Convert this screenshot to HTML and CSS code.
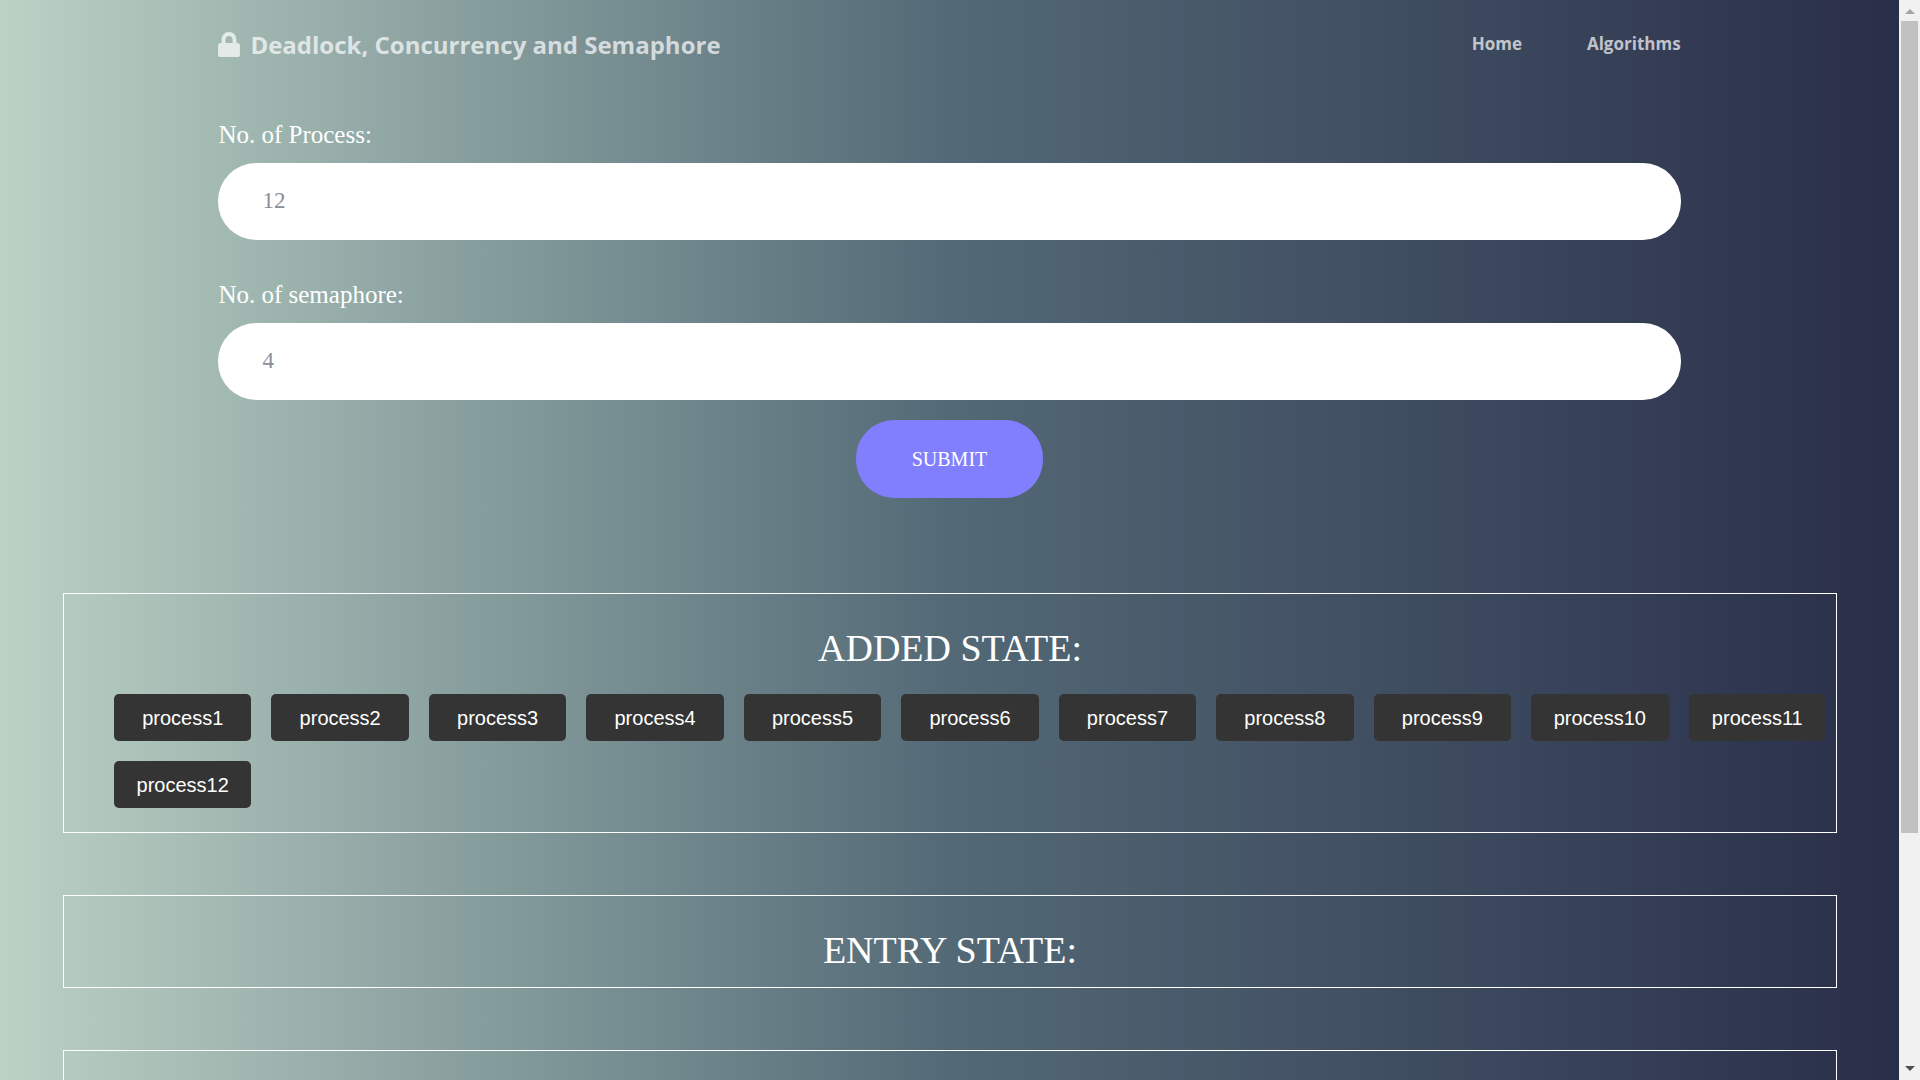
FILE: index.html
```html
<!DOCTYPE html>
<html lang="en">
<head>
  <meta charset="utf-8">
  <meta name="viewport" content="width=device-width, initial-scale=1">
  <title>Deadlock, Concurrency and Semaphore</title>
  <link rel="stylesheet" href="styles.css">
</head>
<body>
  <div class="page">
    <header class="header wrap">
      <a class="brand" href="#">
        <svg class="brand-icon" viewBox="0 0 448 512" aria-hidden="true"><path d="M400 224h-24v-72C376 68.200 307.800 0 224 0S72 68.200 72 152v72H48c-26.500 0-48 21.500-48 48v192c0 26.500 21.500 48 48 48h352c26.500 0 48-21.500 48-48V272c0-26.500-21.500-48-48-48zm-104 0H152v-72c0-39.700 32.300-72 72-72s72 32.300 72 72v72z"/></svg>
        <span>Deadlock, Concurrency and Semaphore</span>
      </a>
      <nav class="nav">
        <a href="#">Home</a>
        <a href="#">Algorithms</a>
      </nav>
    </header>
    <main>
      <form class="form wrap">
        <div class="field">
          <label for="process">No. of Process:</label>
          <input id="process" type="text" value="12">
        </div>
        <div class="field">
          <label for="semaphore">No. of semaphore:</label>
          <input id="semaphore" type="text" value="4">
        </div>
        <button class="submit" type="button">SUBMIT</button>
      </form>
      <div class="states">
        <section class="state">
          <h2>ADDED STATE:</h2>
          <div class="processes">
            <button type="button">process1</button>
            <button type="button">process2</button>
            <button type="button">process3</button>
            <button type="button">process4</button>
            <button type="button">process5</button>
            <button type="button">process6</button>
            <button type="button">process7</button>
            <button type="button">process8</button>
            <button type="button">process9</button>
            <button type="button">process10</button>
            <button type="button">process11</button>
            <button type="button">process12</button>
          </div>
        </section>
        <section class="state">
          <h2>ENTRY STATE:</h2>
        </section>
        <section class="state"></section>
      </div>
    </main>
  </div>
  <div class="scrollbar" aria-hidden="true">
    <svg class="arrow arrow-up" viewBox="0 0 10 5"><path d="M0 5L5 0L10 5z"/></svg>
    <div class="track"><div class="thumb"></div></div>
    <svg class="arrow arrow-down" viewBox="0 0 10 5"><path d="M0 0H10L5 5z"/></svg>
  </div>
</body>
</html>
```

FILE: styles.css
```css
* {
  box-sizing: border-box;
}

body {
  display: flex;
  height: 100vh;
  margin: 0;
  overflow: hidden;
  color: #fff;
  font-family: "Liberation Serif", "Times New Roman", serif;
}

.page {
  flex: 1;
  min-width: 0;
  overflow: hidden;
  background: linear-gradient(to right, #bbd2c5, #536976, #292e49);
}

.wrap {
  width: 77%;
  margin: 0 auto;
}

.header {
  display: flex;
  align-items: center;
  justify-content: space-between;
  height: 88px;
  font-family: "Open Sans", "Segoe UI", sans-serif;
  font-weight: 700;
}

.header a {
  color: rgba(255, 255, 255, 0.7);
  text-decoration: none;
}

.brand {
  display: flex;
  align-items: center;
  gap: 10px;
  font-size: 24px;
}

.brand-icon {
  width: 22px;
  height: 25px;
  fill: currentColor;
}

.nav {
  display: flex;
  gap: 65px;
  padding-bottom: 2px;
  font-size: 17px;
}

.form {
  display: flex;
  flex-direction: column;
  padding-top: 32px;
}

.field {
  display: flex;
  flex-direction: column;
  gap: 13px;
  margin-bottom: 40px;
}

.field label {
  font-size: 25px;
  line-height: 30px;
}

.field input {
  height: 77px;
  padding: 0 44px 2px;
  border: 0;
  border-radius: 38px;
  background: #fff;
  color: #8d8d99;
  font: 23px "Liberation Serif", "Times New Roman", serif;
}

.submit {
  align-self: center;
  width: 187px;
  height: 78px;
  margin-top: -20px;
  border: 0;
  border-radius: 38px;
  background: #827ffe;
  color: #fff;
  font: 20px "Liberation Serif", "Times New Roman", serif;
}

.states {
  display: flex;
  flex-direction: column;
  gap: 62px;
  padding: 95px 62px 62px 63px;
}

.state {
  min-height: 93px;
  border: 1px solid #fff;
}

.state h2 {
  margin: 0;
  padding: 31px 0 14px;
  font-size: 38px;
  font-weight: 400;
  line-height: 46px;
  text-align: center;
}

.processes {
  display: grid;
  grid-template-columns: repeat(auto-fill, minmax(137px, 1fr));
  gap: 20px;
  padding: 9px 10px 24px 50px;
}

.processes button {
  height: 47px;
  padding: 2px 0 0;
  border: 0;
  border-radius: 5px;
  background: #333433;
  color: #fff;
  font: 20px "Liberation Sans", Arial, sans-serif;
}

.scrollbar {
  display: flex;
  flex-direction: column;
  align-items: center;
  width: 21px;
  padding: 9px 0;
  background: #f1f1f1;
}

.arrow {
  width: 10px;
  height: 5px;
}

.arrow-up {
  fill: #a3a3a3;
}

.arrow-down {
  fill: #505050;
}

.track {
  flex: 1;
  padding: 7px 0;
}

.thumb {
  width: 17px;
  height: 78.2%;
  background: #c1c1c1;
}
```
